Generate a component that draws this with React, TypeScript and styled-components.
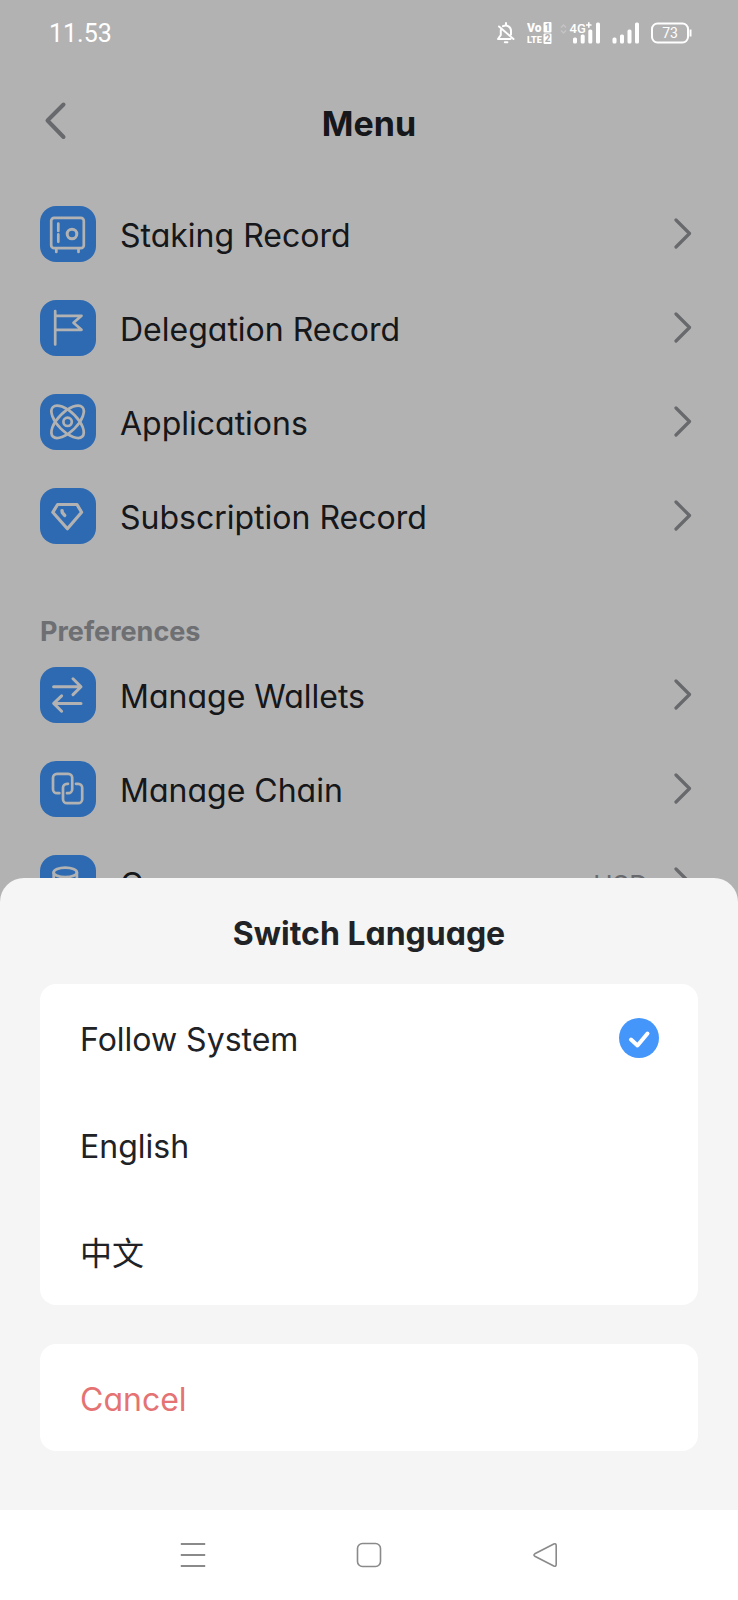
import React, { useState } from 'react';
import styled, { createGlobalStyle } from 'styled-components';

const GlobalStyle = createGlobalStyle`
  *, *::before, *::after { box-sizing: border-box; }
  body {
    margin: 0;
    background: #ffffff;
    color: #202226;
    font-family: Inter, "Noto Sans CJK SC", sans-serif;
    font-size: 32px;
    line-height: 40px;
    font-feature-settings: "cv11", "ss03";
  }
  button { font: inherit; font-feature-settings: inherit; color: inherit; border: 0; background: none; padding: 0; cursor: pointer; }
  a { color: inherit; text-decoration: none; }
  svg { display: block; flex: none; }
`;

const Screen = styled.div`
  position: relative;
  min-height: 100vh;
  overflow: hidden;
`;

const StatusBar = styled.div`
  position: relative;
  z-index: 2;
  display: flex;
  align-items: center;
  justify-content: space-between;
  height: 66px;
  padding: 0 46px 0 49px;
  color: #ffffff;
  font-family: Roboto, sans-serif;
  font-size: 25px;
`;

const StatusTime = styled.span`
  padding-top: 2px;
`;

const StatusIcons = styled.div`
  display: flex;
  align-items: center;
  gap: 12px;
`;

const NetworkIcons = styled.div`
  display: flex;
  align-items: center;
  gap: 7px;
`;

const Header = styled.header`
  display: grid;
  grid-template-columns: 48px 1fr 48px;
  align-items: center;
  height: 110px;
  padding: 0 32px;
`;

const BackButton = styled.button`
  display: grid;
  place-items: center;
  height: 48px;
  color: #95979b;
`;

const PageTitle = styled.h1`
  margin: 0;
  padding-top: 5px;
  text-align: center;
  font-size: 34px;
  font-weight: 700;
`;

const Content = styled.main`
  padding: 30px 40px 0;
`;

const MenuList = styled.ul`
  display: grid;
  gap: 38px;
  margin: 0;
  padding: 0;
  list-style: none;
`;

const MenuLink = styled.a`
  display: flex;
  align-items: center;
  height: 56px;
`;

const IconTile = styled.span`
  width: 56px;
  height: 56px;
  border-radius: 16px;
  background: #4299ff;
`;

const MenuLabel = styled.span`
  flex: 1;
  padding: 4px 0 0 24px;
`;

const MenuValue = styled.span`
  padding: 4px 18px 0 0;
  color: #95979b;
  font-size: 26px;
`;

const RowChevron = styled.svg`
  color: #95979b;
`;

const SectionTitle = styled.h2`
  margin: 73px 0 20px;
  color: #9da0a5;
  font-size: 27px;
  line-height: 30px;
  font-weight: 700;
`;

const Backdrop = styled.div`
  position: absolute;
  inset: 0;
  z-index: 1;
  background: rgba(0, 0, 0, 0.3);
`;

const BottomLayer = styled.div`
  position: absolute;
  left: 0;
  right: 0;
  bottom: 0;
  z-index: 3;
`;

const Sheet = styled.section`
  padding: 0 40px 59px;
  border-radius: 24px 24px 0 0;
  background: #f5f5f5;
`;

const SheetTitle = styled.h2`
  margin: 0;
  padding: 36px 0 30px;
  text-align: center;
  font-size: 32px;
  font-weight: 700;
`;

const OptionCard = styled.div`
  overflow: hidden;
  border-radius: 16px;
  background: #ffffff;
`;

const Option = styled.label`
  display: flex;
  align-items: center;
  justify-content: space-between;
  height: 107px;
  padding: 0 39px 0 40px;
  cursor: pointer;
`;

const OptionText = styled.span`
  padding-top: 4px;
`;

const OptionRadio = styled.input`
  appearance: none;
  width: 40px;
  height: 40px;
  margin: 0;
`;

const RadioSlot = styled.span`
  display: grid;
  > * { grid-area: 1 / 1; }
`;

const CancelButton = styled.button`
  display: block;
  width: 100%;
  height: 107px;
  margin-top: 39px;
  padding: 4px 40px 0;
  border-radius: 16px;
  background: #ffffff;
  color: #e57373;
  text-align: left;
`;

const NavBar = styled.nav`
  display: grid;
  grid-template-columns: repeat(3, 1fr);
  height: 90px;
  padding: 0 105px;
  background: #ffffff;
`;

const NavButton = styled.button`
  display: grid;
  place-items: center;
  color: #8a8a8a;
`;

const glyphs = {
  safe: (
    <>
      <rect x="11.2" y="11.8" width="32.6" height="30.4" rx="3" />
      <path d="M16.3 43v3M38.5 43v3M18.3 17.6v7.4M18.3 28.4v7.4" />
      <circle cx="32" cy="28" r="4.8" strokeWidth="3" />
    </>
  ),
  flag: <path d="M15.2 11v33.4M15.2 15.8H41.5l-8 7 8 7H15.2" />,
  atom: (
    <>
      <ellipse cx="27.6" cy="27.8" rx="20.8" ry="9.6" transform="rotate(45 27.6 27.8)" />
      <ellipse cx="27.6" cy="27.8" rx="20.8" ry="9.6" transform="rotate(-45 27.6 27.8)" />
      <circle cx="27.6" cy="27.8" r="4.2" />
    </>
  ),
  diamond: (
    <>
      <path strokeWidth="3.2" d="M17.6 16.5h19.4l4.6 7.8L27.4 40.7 12.8 24.3z" />
      <path strokeWidth="3.4" d="M22 22.6l.3 2 2.4 2.8" />
    </>
  ),
  swap: <path strokeWidth="3" d="M13.6 19.7H40.6M33 11.8l8 7.9-8 7.9M41 36.4H14.2M21.6 28.8l-7.9 7.6 7.9 7.8" />,
  chain: (
    <path d="M19.4 32.2H17a4 4 0 0 1-4-4V16.8a4 4 0 0 1 4-4h11.2a4 4 0 0 1 4 4v11.4a4 4 0 0 1-4 4H27M36 22.8h2.2a4 4 0 0 1 4 4v11.4a4 4 0 0 1-4 4H27a4 4 0 0 1-4-4V26.8a4 4 0 0 1 4-4h1" />
  ),
  coins: (
    <>
      <ellipse cx="25.3" cy="17.4" rx="11.6" ry="4.8" />
      <path d="M13.7 17.4v20c0 2.8 5 5 11.6 5M36.9 17.4v9M13.7 24c0 2.8 5 4.8 11.6 4.8S36.9 26.8 36.9 24" />
    </>
  ),
};

type GlyphName = keyof typeof glyphs;

const Glyph = ({ name }: { name: GlyphName }) => (
  <IconTile>
    <svg width="56" height="56" viewBox="0 0 56 56" fill="none" stroke="#ffffff" strokeWidth="2.7" strokeLinecap="round" strokeLinejoin="round" aria-hidden="true">
      {glyphs[name]}
    </svg>
  </IconTile>
);

const MenuItem = ({ icon, label, value }: { icon: GlyphName; label: string; value?: string }) => (
  <li>
    <MenuLink href="#">
      <Glyph name={icon} />
      <MenuLabel>{label}</MenuLabel>
      {value && <MenuValue>{value}</MenuValue>}
      <RowChevron width="32" height="32" viewBox="0 0 32 32" fill="none" stroke="currentColor" strokeWidth="3.2" strokeLinecap="round" strokeLinejoin="round" aria-hidden="true">
        <path d="M10 2L23.5 15.5 10 29" />
      </RowChevron>
    </MenuLink>
  </li>
);

const records: { icon: GlyphName; label: string }[] = [
  { icon: 'safe', label: 'Staking Record' },
  { icon: 'flag', label: 'Delegation Record' },
  { icon: 'atom', label: 'Applications' },
  { icon: 'diamond', label: 'Subscription Record' },
];

const preferences: { icon: GlyphName; label: string; value?: string }[] = [
  { icon: 'swap', label: 'Manage Wallets' },
  { icon: 'chain', label: 'Manage Chain' },
  { icon: 'coins', label: 'Currency', value: 'USD' },
];

const languages = ['Follow System', 'English', '中文'];

const StatusGlyphs = () => (
  <StatusIcons>
    <svg width="18" height="22" viewBox="0 0 18 22" fill="none" stroke="#fff" strokeWidth="2" strokeLinecap="round" strokeLinejoin="round">
      <path d="M9 1v1.500M6 4.200C10 2.200 14 5 14 9v3.500M3.800 8V13L1 17h12.500M2 4.500l14.500 12.500" />
      <path d="M7.800 20.200h2.600" />
    </svg>
    <NetworkIcons>
      <svg width="25" height="26" viewBox="0 -2 25 26" fill="#fff" fontFamily="Roboto, sans-serif" fontWeight="900">
        <text x="0" y="10" fontSize="12">Vo</text>
        <text x="0" y="21" fontSize="9">LTE</text>
        <rect x="16.500" y="0" width="8" height="10.500" rx="1" />
        <rect x="16.500" y="11.500" width="8" height="10.500" rx="1" />
        <g fill="#b2b2b2" fontSize="10" fontWeight="700">
          <text x="17.700" y="8.800">1</text>
          <text x="17.700" y="20.400">2</text>
        </g>
      </svg>
      <svg width="41" height="30" viewBox="0 -4 41 30" fill="#fff" fontFamily="Roboto, sans-serif" fontWeight="500">
        <path d="M2 5.500L4.500 3 7 5.500M2 8.500L4.500 11 7 8.500" fill="none" stroke="#c4c4c4" strokeWidth="1.500" />
        <text x="10.500" y="10.500" fontSize="13">4G</text>
        <path d="M27 3h5.500M29.800 .2v5.500" stroke="#fff" strokeWidth="1.600" />
        <rect x="14" y="15.500" width="4" height="6" rx="1.500" />
        <rect x="21.700" y="12.500" width="4" height="9" rx="1.500" />
        <rect x="29.300" y="7.500" width="4" height="14" rx="1.500" />
        <rect x="37" y="0.500" width="4" height="21" rx="1.500" />
      </svg>
    </NetworkIcons>
    <svg width="27" height="22" viewBox="0 0 27 22" fill="#fff">
      <rect x="0.500" y="15.500" width="4" height="6" rx="1.500" />
      <rect x="8" y="12.500" width="4" height="9" rx="1.500" />
      <rect x="15.500" y="7.500" width="4" height="14" rx="1.500" />
      <rect x="23" y="0.500" width="4" height="21" rx="1.500" />
    </svg>
    <svg width="41" height="22" viewBox="0 0 41 22" fill="none" stroke="#fff" strokeWidth="2">
      <rect x="1" y="1.500" width="36" height="19" rx="5.500" />
      <path d="M39.500 7.500v7" />
      <text x="19" y="16" fontSize="14" fontFamily="Roboto, sans-serif" textAnchor="middle" fill="#fff" stroke="none">73</text>
    </svg>
  </StatusIcons>
);

export default function App() {
  const [language, setLanguage] = useState(languages[0]);

  return (
    <Screen>
      <GlobalStyle />
      <StatusBar>
        <StatusTime>11.53</StatusTime>
        <StatusGlyphs />
      </StatusBar>
      <Header>
        <BackButton aria-label="Back">
          <svg width="24" height="40" viewBox="0 0 24 40" fill="none" stroke="currentColor" strokeWidth="4" strokeLinecap="round" strokeLinejoin="round">
            <path d="M19.500 3.500L3.500 19.500l16 16.500" />
          </svg>
        </BackButton>
        <PageTitle>Menu</PageTitle>
      </Header>
      <Content>
        <MenuList>
          {records.map((item) => <MenuItem key={item.label} {...item} />)}
        </MenuList>
        <SectionTitle>Preferences</SectionTitle>
        <MenuList>
          {preferences.map((item) => <MenuItem key={item.label} {...item} />)}
        </MenuList>
      </Content>
      <Backdrop />
      <BottomLayer>
        <Sheet role="dialog" aria-labelledby="language-title">
          <SheetTitle id="language-title">Switch Language</SheetTitle>
          <OptionCard>
            {languages.map((name) => (
              <Option key={name}>
                <OptionText>{name}</OptionText>
                <RadioSlot>
                  <OptionRadio type="radio" name="language" checked={language === name} onChange={() => setLanguage(name)} />
                  {language === name && (
                    <svg width="40" height="40" viewBox="0 0 40 40" fill="none" aria-hidden="true">
                      <circle cx="20" cy="20" r="20" fill="#4596fa" />
                      <path d="M12 21.500l6.500 6L28.500 15.500" stroke="#fff" strokeWidth="4" strokeLinecap="round" strokeLinejoin="round" />
                    </svg>
                  )}
                </RadioSlot>
              </Option>
            ))}
          </OptionCard>
          <CancelButton>Cancel</CancelButton>
        </Sheet>
        <NavBar>
          <NavButton aria-label="Recent apps">
            <svg width="26" height="26" viewBox="0 0 26 26" fill="none" stroke="currentColor" strokeWidth="2">
              <path d="M.8 2h24.400M.8 13h24.400M.8 24h24.400" />
            </svg>
          </NavButton>
          <NavButton aria-label="Home">
            <svg width="26" height="26" viewBox="0 0 26 26" fill="none" stroke="currentColor" strokeWidth="1.600">
              <rect x="1.500" y="1.500" width="23" height="23" rx="5" />
            </svg>
          </NavButton>
          <NavButton aria-label="Back">
            <svg width="26" height="26" viewBox="0 0 26 26" fill="none" stroke="currentColor" strokeWidth="1.600" strokeLinejoin="round">
              <path d="M2.800 11.800L21.800 2q2.400-.9 2.400 1.700v18.600q0 2.600-2.400 1.700L2.800 14.200q-1.700-1.200 0-2.400z" />
            </svg>
          </NavButton>
        </NavBar>
      </BottomLayer>
    </Screen>
  );
}
